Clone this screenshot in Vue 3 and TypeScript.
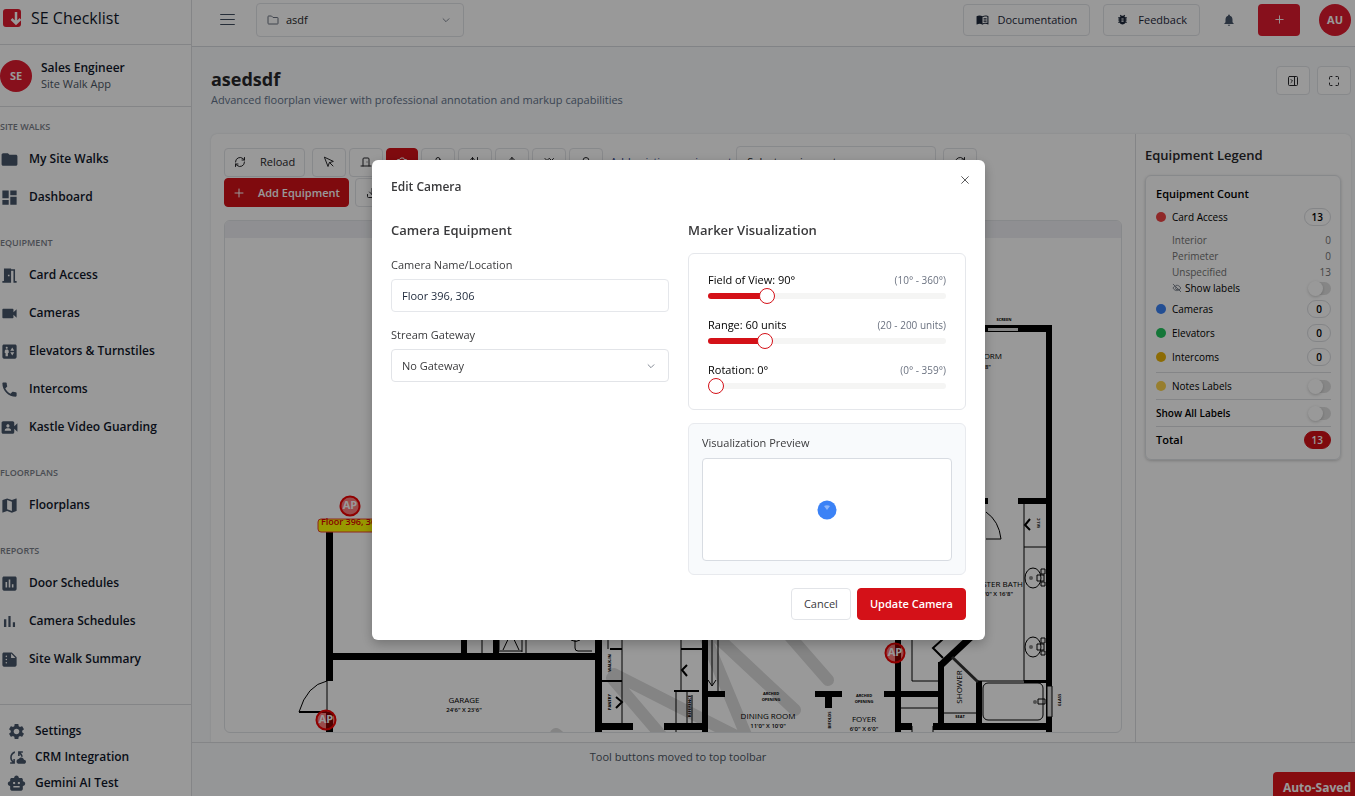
<script setup lang="ts">
import { computed, ref } from 'vue'

interface NavItem { label: string; icon: string }
interface NavGroup { title: string; items: NavItem[] }

const filled: Record<string, string> = {
  folder: 'M10 4H4c-1.1 0-1.99.9-1.99 2L2 18c0 1.1.9 2 2 2h16c1.1 0 2-.9 2-2V8c0-1.1-.9-2-2-2h-8l-2-2z',
  dashboard: 'M3 13h8V3H3v10zm0 8h8v-6H3v6zm10 0h8V11h-8v10zm0-18v6h8V3h-8z',
  door: 'M14 6v15H3v-2h2V3h9v1h5v15h2v2h-4V6h-3zm-4 5v2h2v-2h-2z',
  video: 'M17 10.5V7c0-.55-.45-1-1-1H4c-.55 0-1 .45-1 1v10c0 .55.45 1 1 1h12c.55 0 1-.45 1-1v-3.5l4 4v-11l-4 4z',
  elevator: 'M19 3H5c-1.1 0-2 .9-2 2v14c0 1.1.9 2 2 2h14c1.1 0 2-.9 2-2V5c0-1.1-.9-2-2-2zM8.5 6c.69 0 1.25.56 1.25 1.25S9.19 8.5 8.5 8.5s-1.25-.56-1.25-1.25S7.81 6 8.5 6zM11 14h-1v4H7v-4H6v-2.5c0-1.1.9-2 2-2h1c1.1 0 2 .9 2 2V14zm4.5 3L13 13h5l-2.5 4zM13 11l2.5-4 2.5 4h-5z',
  phone: 'M6.62 10.79c1.44 2.83 3.76 5.14 6.59 6.59l2.2-2.2c.27-.27.67-.36 1.02-.24 1.12.37 2.33.57 3.57.57.55 0 1 .45 1 1V20c0 .55-.45 1-1 1-9.39 0-17-7.61-17-17 0-.55.45-1 1-1h3.5c.55 0 1 .45 1 1 0 1.25.2 2.45.57 3.57.11.35.03.74-.25 1.02l-2.2 2.2z',
  guard: 'M18 10.48V6c0-1.1-.9-2-2-2H4c-1.1 0-2 .9-2 2v12c0 1.1.9 2 2 2h12c1.1 0 2-.9 2-2v-4.48l4 3.98v-11l-4 3.98zM10 8c1.1 0 2 .9 2 2s-.9 2-2 2-2-.9-2-2 .9-2 2-2zm4 8H6v-.57c0-.81.48-1.53 1.22-1.85.85-.37 1.79-.58 2.78-.58.99 0 1.93.21 2.78.58.74.32 1.22 1.04 1.22 1.85V16z',
  map: 'M20.5 3l-.16.03L15 5.1 9 3 3.36 4.9c-.21.07-.36.25-.36.48V20.5c0 .28.22.5.5.5l.16-.03L9 18.9l6 2.1 5.64-1.9c.21-.07.36-.25.36-.48V3.5c0-.28-.22-.5-.5-.5zM15 19l-6-2.11V5l6 2.11V19z',
  assessment: 'M19 3H5c-1.1 0-2 .9-2 2v14c0 1.1.9 2 2 2h14c1.1 0 2-.9 2-2V5c0-1.1-.9-2-2-2zM9 17H7v-7h2v7zm4 0h-2V7h2v10zm4 0h-2v-4h2v4z',
  bars: 'M5 9.2h3V19H5zM10.6 5h2.8v14h-2.8zm5.6 8H19v6h-2.8z',
  summary: 'M15 3H5c-1.1 0-1.99.9-1.99 2L3 19c0 1.1.89 2 1.99 2H19c1.1 0 2-.9 2-2V9l-6-6zM8 17c-.55 0-1-.45-1-1s.45-1 1-1 1 .45 1 1-.45 1-1 1zm0-4c-.55 0-1-.45-1-1s.45-1 1-1 1 .45 1 1-.45 1-1 1zm0-4c-.55 0-1-.45-1-1s.45-1 1-1 1 .45 1 1-.45 1-1 1zm6 1V4.5l5.5 5.5H14z',
  settings: 'M19.14 12.94c.04-.3.06-.61.06-.94 0-.32-.02-.64-.07-.94l2.03-1.58c.18-.14.23-.41.12-.61l-1.92-3.32c-.12-.22-.37-.29-.59-.22l-2.39.96c-.5-.38-1.03-.7-1.62-.94l-.36-2.54c-.04-.24-.24-.41-.48-.41h-3.84c-.24 0-.43.17-.47.41l-.36 2.54c-.59.24-1.13.57-1.62.94l-2.39-.96c-.22-.08-.47 0-.59.22L2.74 8.87c-.12.21-.08.47.12.61l2.03 1.58c-.05.3-.09.63-.09.94s.02.64.07.94l-2.03 1.58c-.18.14-.23.41-.12.61l1.92 3.32c.12.22.37.29.59.22l2.39-.96c.5.38 1.03.7 1.62.94l.36 2.54c.05.24.24.41.48.41h3.84c.24 0 .44-.17.47-.41l.36-2.54c.59-.24 1.13-.56 1.62-.94l2.39.96c.22.08.47 0 .59-.22l1.92-3.32c.12-.22.07-.47-.12-.61l-2.01-1.58zM12 15.6c-1.98 0-3.6-1.62-3.6-3.6s1.62-3.6 3.6-3.6 3.6 1.62 3.6 3.6-1.62 3.6-3.6 3.6z',
  sync: 'M21.5 14.98c-.02 0-.03 0-.05.01C21.2 13.3 19.76 12 18 12c-1.4 0-2.6.83-3.16 2.02C13.26 14.1 12 15.4 12 17c0 1.66 1.34 3 3 3l6.5-.02c1.38 0 2.5-1.12 2.5-2.5s-1.12-2.5-2.5-2.5zM10 4.26v2.09C7.67 7.18 6 9.39 6 12c0 1.77.78 3.34 2 4.44V14h2v6H4v-2h2.73C5.06 16.54 4 14.4 4 12c0-3.73 2.55-6.85 6-7.74zM20 6h-2.73c1.43 1.26 2.41 3.01 2.66 5h-2.02c-.23-1.36-.93-2.55-1.91-3.44V10h-2V4h6v2z',
  robot: 'M20 9V7c0-1.1-.9-2-2-2h-3c0-1.66-1.34-3-3-3S9 3.34 9 5H6c-1.1 0-2 .9-2 2v2c-1.66 0-3 1.34-3 3s1.34 3 3 3v4c0 1.1.9 2 2 2h12c1.1 0 2-.9 2-2v-4c1.66 0 3-1.34 3-3s-1.34-3-3-3zM7.5 11.5c0-.83.67-1.5 1.5-1.5s1.5.67 1.5 1.5S9.83 13 9 13s-1.5-.67-1.5-1.5zM16 17H8v-2h8v2zm-1-4c-.83 0-1.5-.67-1.5-1.5S14.17 10 15 10s1.5.67 1.5 1.5S15.83 13 15 13z',
  bug: 'M20 8h-2.81c-.45-.78-1.07-1.45-1.82-1.96L17 4.41 15.59 3l-2.17 2.17C12.96 5.06 12.49 5 12 5c-.49 0-.96.06-1.41.17L8.41 3 7 4.41l1.62 1.63C7.88 6.55 7.26 7.22 6.81 8H4v2h2.09c-.05.33-.09.66-.09 1v1H4v2h2v1c0 .34.04.67.09 1H4v2h2.81c1.04 1.79 2.97 3 5.19 3s4.15-1.21 5.19-3H20v-2h-2.09c.05-.33.09-.66.09-1v-1h2v-2h-2v-1c0-.34-.04-.67-.09-1H20V8zm-6 8h-4v-2h4v2zm0-4h-4v-2h4v2z',
  bell: 'M12 22c1.1 0 2-.9 2-2h-4c0 1.1.89 2 2 2zm6-6v-5c0-3.07-1.64-5.64-4.5-6.32V4c0-.83-.67-1.5-1.5-1.5s-1.5.67-1.5 1.5v.68C7.63 5.36 6 7.92 6 11v5l-2 2v1h16v-1l-2-2z',
  book: 'M21 5c-1.11-.35-2.33-.5-3.5-.5-1.95 0-4.05.4-5.5 1.5-1.45-1.1-3.55-1.5-5.5-1.5S2.45 4.9 1 6v14.65c0 .25.25.5.5.5.1 0 .15-.05.25-.05C3.1 20.45 5.05 20 6.5 20c1.95 0 4.05.4 5.5 1.5 1.35-.85 3.8-1.5 5.5-1.5 1.65 0 3.35.3 4.75 1.05.1.05.15.05.25.05.25 0 .5-.25.5-.5V6c-.6-.45-1.25-.75-2-1zm0 13.5c-1.1-.35-2.3-.5-3.5-.5-1.7 0-4.15.65-5.5 1.5V8c1.35-.85 3.8-1.5 5.5-1.5 1.2 0 2.4.15 3.5.5v11.5zM14 9.5h5.5V11H14zM14 12h5.5v1.5H14zM14 14.5h5.5V16H14z',
}

const outlined: Record<string, string> = {
  refresh: 'M3 12a9 9 0 0 1 15-6.7L21 8M21 3v5h-5M21 12a9 9 0 0 1-15 6.7L3 16M3 21v-5h5',
  pointer: 'M3 3l7 18 2.5-7.5L20 11zM13 13l7 7',
  doorway: 'M18 20V6a2 2 0 0 0-2-2H8a2 2 0 0 0-2 2v14M2 20h20M14 12v.01',
  camera: 'M14.5 4h-5L7 7H4a2 2 0 0 0-2 2v9a2 2 0 0 0 2 2h16a2 2 0 0 0 2-2V9a2 2 0 0 0-2-2h-3zM15 13a3 3 0 1 1-6 0 3 3 0 0 1 6 0z',
  user: 'M16 7a4 4 0 1 1-8 0 4 4 0 0 1 8 0zM5 21v-2a4 4 0 0 1 4-4h6a4 4 0 0 1 4 4v2',
  updown: 'M3 8l4-5 4 5M7 3v18M17 3v18M13 16l4 5 4-5',
  arrowUp: 'M12 21V3M7 8l5-5 5 5',
  chevrons: 'M4 5l4 4 4-4M13 5l4 4 4-4M6 19h12',
  search: 'M18 9a6 6 0 1 1-12 0 6 6 0 0 1 12 0zM21 21l-5.5-5.5',
  download: 'M12 3v12M7 10l5 5 5-5M3 15v4a2 2 0 0 0 2 2h14a2 2 0 0 0 2-2v-4',
  panel: 'M5 3h14a2 2 0 0 1 2 2v14a2 2 0 0 1-2 2H5a2 2 0 0 1-2-2V5a2 2 0 0 1 2-2zM15 3v18M8 9l3 3-3 3',
  maximize: 'M8 3H5a2 2 0 0 0-2 2v3M21 8V5a2 2 0 0 0-2-2h-3M3 16v3a2 2 0 0 0 2 2h3M16 21h3a2 2 0 0 0 2-2v-3',
  plus: 'M12 4v16M4 12h16',
  chevron: 'M5 9l7 7 7-7',
  close: 'M4 4l16 16M20 4L4 20',
  folderLine: 'M2 5a1 1 0 0 1 1-1h6l3 3h9a1 1 0 0 1 1 1v11a1 1 0 0 1-1 1H3a1 1 0 0 1-1-1z',
  menu: 'M1 4h22M1 12h22M1 20h22',
  eyeOff: 'M3 3l18 18M10 5.500c5-1 9 2.500 11 6.500-1 2-2 3-3.500 4.200M7 7c-2 1.200-3.500 3-4.500 5 3 6 9 8 14 5M9.500 10a3.500 3.500 0 0 0 5 5',
}

const navGroups: NavGroup[] = [
  { title: 'SITE WALKS', items: [{ label: 'My Site Walks', icon: 'folder' }, { label: 'Dashboard', icon: 'dashboard' }] },
  {
    title: 'EQUIPMENT',
    items: [
      { label: 'Card Access', icon: 'door' },
      { label: 'Cameras', icon: 'video' },
      { label: 'Elevators & Turnstiles', icon: 'elevator' },
      { label: 'Intercoms', icon: 'phone' },
      { label: 'Kastle Video Guarding', icon: 'guard' },
    ],
  },
  { title: 'FLOORPLANS', items: [{ label: 'Floorplans', icon: 'map' }] },
  {
    title: 'REPORTS',
    items: [
      { label: 'Door Schedules', icon: 'assessment' },
      { label: 'Camera Schedules', icon: 'bars' },
      { label: 'Site Walk Summary', icon: 'summary' },
    ],
  },
]

const footerItems: NavItem[] = [
  { label: 'Settings', icon: 'settings' },
  { label: 'CRM Integration', icon: 'sync' },
  { label: 'Gemini AI Test', icon: 'robot' },
]

const tools = [
  { name: 'Select', icon: 'pointer' },
  { name: 'Card access', icon: 'doorway' },
  { name: 'Camera', icon: 'camera' },
  { name: 'Turnstile', icon: 'user' },
  { name: 'Elevator', icon: 'updown' },
  { name: 'Move', icon: 'arrowUp' },
  { name: 'Intercom', icon: 'chevrons' },
  { name: 'Search', icon: 'search' },
]
const activeTool = ref('Camera')

const accessBreakdown = [
  { label: 'Interior', count: 0 },
  { label: 'Perimeter', count: 0 },
  { label: 'Unspecified', count: 13 },
]
const equipment = [
  { label: 'Cameras', count: 0, tone: 'blue' },
  { label: 'Elevators', count: 0, tone: 'green' },
  { label: 'Intercoms', count: 0, tone: 'amber' },
]

const markers = [
  { x: 350, y: 506 },
  { x: 326, y: 720 },
  { x: 895, y: 653 },
]

const modalOpen = ref(true)
const project = ref('asdf')
const cameraName = ref('Floor 396, 306')
const gateway = ref('No Gateway')

const fov = ref(90)
const range = ref(60)
const rotation = ref(0)

const fillOf = (value: number, min: number, max: number) => `${((value - min) / (max - min)) * 100}%`

const sliders = computed(() => [
  { id: 'fov', label: `Field of View: ${fov.value}°`, hint: '(10° - 360°)', value: fov.value, min: 10, max: 360, fill: fillOf(fov.value, 10, 360) },
  { id: 'range', label: `Range: ${range.value} units`, hint: '(20 - 200 units)', value: range.value, min: 20, max: 200, fill: fillOf(range.value, 20, 200) },
  { id: 'rotation', label: `Rotation: ${rotation.value}°`, hint: '(0° - 359°)', value: rotation.value, min: 0, max: 359, fill: fillOf(rotation.value, 0, 359) },
])

function slide(id: string, event: Event) {
  const value = Number((event.target as HTMLInputElement).value)
  if (id === 'fov') fov.value = value
  else if (id === 'range') range.value = value
  else rotation.value = value
}
</script>

<template>
  <div class="shell">
    <aside class="sidebar">
      <div class="brand">
        <svg class="logo" viewBox="0 0 20 20" aria-hidden="true">
          <rect x="0" y="1" width="18" height="18" rx="3" fill="#e21b2f" />
          <path d="M13 4v11M8.500 11l4.500 4.500 4.500-4.500" fill="none" stroke="#fff" stroke-width="2.500" />
        </svg>
        <span>SE Checklist</span>
      </div>
      <div class="profile">
        <span class="avatar">SE</span>
        <div>
          <div class="profile-name">Sales Engineer</div>
          <div class="profile-sub">Site Walk App</div>
        </div>
      </div>
      <nav class="nav">
        <section v-for="group in navGroups" :key="group.title" class="nav-group">
          <h2>{{ group.title }}</h2>
          <a v-for="item in group.items" :key="item.label" href="#">
            <svg class="fill-icon" viewBox="0 0 24 24" aria-hidden="true"><path :d="filled[item.icon]" /></svg>
            {{ item.label }}
          </a>
        </section>
      </nav>
      <nav class="nav-footer">
        <a v-for="item in footerItems" :key="item.label" href="#">
          <svg class="fill-icon" viewBox="0 0 24 24" aria-hidden="true"><path :d="filled[item.icon]" /></svg>
          {{ item.label }}
        </a>
      </nav>
    </aside>

    <div class="main">
      <header class="topbar">
        <button class="menu-btn" aria-label="Toggle menu">
          <svg class="line-icon" viewBox="0 0 24 24"><path :d="outlined.menu" /></svg>
        </button>
        <label class="select-box project">
          <svg class="line-icon" viewBox="0 0 24 24" aria-hidden="true"><path :d="outlined.folderLine" /></svg>
          <select v-model="project" aria-label="Project"><option>asdf</option></select>
          <svg class="line-icon chev" viewBox="0 0 24 24" aria-hidden="true"><path :d="outlined.chevron" /></svg>
        </label>
        <div class="top-actions">
          <button class="btn tall docs">
            <svg class="fill-icon" viewBox="0 0 24 24" aria-hidden="true"><path :d="filled.book" fill-rule="evenodd" /></svg>
            Documentation
          </button>
          <button class="btn tall">
            <svg class="fill-icon" viewBox="0 0 24 24" aria-hidden="true"><path :d="filled.bug" /></svg>
            Feedback
          </button>
          <button class="bell" aria-label="Notifications">
            <svg class="fill-icon" viewBox="0 0 24 24"><path :d="filled.bell" /></svg>
          </button>
          <button class="create" aria-label="Create">
            <svg class="line-icon" viewBox="0 0 24 24"><path :d="outlined.plus" /></svg>
          </button>
          <span class="avatar">AU</span>
        </div>
      </header>

      <div class="page-head">
        <div>
          <h1>asedsdf</h1>
          <p>Advanced floorplan viewer with professional annotation and markup capabilities</p>
        </div>
        <div class="page-actions">
          <button class="btn icon" aria-label="Collapse legend">
            <svg class="line-icon" viewBox="0 0 24 24"><path :d="outlined.panel" /></svg>
          </button>
          <button class="btn icon" aria-label="Fullscreen">
            <svg class="line-icon" viewBox="0 0 24 24"><path :d="outlined.maximize" /></svg>
          </button>
        </div>
      </div>

      <div class="workspace">
        <section class="viewer">
          <div class="toolbar">
            <button class="btn reload">
              <svg class="line-icon" viewBox="0 0 24 24" aria-hidden="true"><path :d="outlined.refresh" /></svg>
              Reload
            </button>
            <div class="tools">
              <button
                v-for="tool in tools"
                :key="tool.name"
                class="btn icon"
                :class="{ active: activeTool === tool.name }"
                :aria-label="tool.name"
                @click="activeTool = tool.name"
              >
                <svg class="line-icon" viewBox="0 0 24 24"><path :d="outlined[tool.icon]" /></svg>
              </button>
            </div>
            <label class="existing" for="existing">Add existing equipment:</label>
            <div class="select-box existing-select">
              <select id="existing"><option>Select equipment...</option></select>
            </div>
            <button class="btn icon" aria-label="Refresh equipment">
              <svg class="line-icon" viewBox="0 0 24 24"><path :d="outlined.refresh" /></svg>
            </button>
          </div>
          <div class="toolbar second">
            <button class="btn primary add">
              <svg class="line-icon" viewBox="0 0 24 24" aria-hidden="true"><path :d="outlined.plus" /></svg>
              Add Equipment
            </button>
            <button class="btn icon" aria-label="Download">
              <svg class="line-icon" viewBox="0 0 24 24"><path :d="outlined.download" /></svg>
            </button>
          </div>

          <div class="canvas">
            <svg class="plan" viewBox="225 221 896 511" width="896" height="511" role="img" aria-label="Floorplan">
              <rect x="225" y="221" width="2000" height="17" fill="#eeeff3" />
              <g stroke="#dcdcdc" stroke-width="12" stroke-linecap="round" fill="none">
                <path d="M614 674L740 738M612 678L665 740M704 634L748 740M718 638L795 710M780 625L828 680M556 734L640 800" />
              </g>
              <g fill="#000">
                <path d="M326 532h7v149h-7zM326 712h7v20h-7zM333 653h262v7H333zM461 630h6v24h-6zM493 630h6v24h-6zM595 630h7v102h-7zM595 723h38v7h-38z" />
                <path d="M702 630h6v102h-6zM664 723h40v7h-40zM708 691h17v6h-17zM815 691h27v6h-27zM825 697h7v11h-7zM884 691h56v6h-56zM895 630h6v102h-6zM895 723h17v7h-17z" />
                <path d="M938 662h6v66h-6zM976 681h6v46h-6zM933 723h115v7H933zM1046 326h6v406h-6zM980 325h72v7h-72zM1018 498h28v6h-28zM980 498h8v6h-8zM1024 680h24v3h-24z" />
              </g>
              <path d="M988 328h30v3h-30zM1047 686h5v31h-5z" fill="#ddd" />
              <g stroke="#000" fill="none">
                <path d="M941 665L972 636" stroke-width="7" />
                <path d="M952 657L978 682" stroke="#333" stroke-width="3" />
                <path d="M1030 519l-5 6 5 5M687 665l-5 5 5 6M616 697l6 5-6 6" stroke-width="2" />
                <path d="M299 712h28M943 658l-10-10 10-9M674 691h25M610 649h12M601 681h21M681 649h21" stroke-width="2" />
                <path d="M299 712q8-27 28-31M986 539h15M986 512q13 9 15 27" />
                <path d="M327 681v31M482 630v23M526 630v23M500 651h22M503 650l8-17 8 17M499 630v22M522 630v22M575 630v18q0 3 3 3h14M571 640q5 3 9 0M622 630v93M681 630v61M676 691v41M687 691v32M692 695v30M712 630v56M718 630v61M708 680l4 6 4-6M608 649v-12M912 630v51h26M901 708h37M944 713h32M978 681h46M1024 504v177M1024 547h22M912 732v-6M933 732v-6" />
                <rect x="983" y="683" width="60" height="37" rx="5" />
                <ellipse cx="1033" cy="578" rx="8" ry="10" />
                <ellipse cx="1033" cy="647" rx="8" ry="10" />
                <path d="M1037 575h7v6h-7zM1041 569h4v5h-4zM1041 582h4v4h-4zM1037 644h7v6h-7zM1041 638h4v5h-4zM1041 651h4v4h-4zM1038 699h7v5h-7zM1047 686h5v31h-5z" />
              </g>
              <g fill="#888">
                <circle cx="1031" cy="578" r="2" /><circle cx="1031" cy="647" r="2" /><circle cx="1035" cy="702" r="2" />
              </g>
              <g class="room">
                <text x="464" y="703">GARAGE</text>
                <text x="768" y="719">DINING ROOM</text>
                <text x="864" y="722">FOYER</text>
                <text x="1002" y="359" text-anchor="end" class="end">DORM</text>
                <text x="1023" y="587" class="end">MASTER BATH</text>
                <text transform="translate(962 687) rotate(-90)">SHOWER</text>
              </g>
              <g class="dims">
                <text x="464" y="712">24'6" X 23'6"</text>
                <text x="768" y="728">11'0" X 10'0"</text>
                <text x="864" y="731">6'0" X 6'0"</text>
                <text x="991" y="369" class="end">12'8"</text>
                <text x="1013" y="596" class="end">10'0" X 16'8"</text>
              </g>
              <g class="tiny">
                <text x="771" y="695">ARCHED</text><text x="771" y="701">OPENING</text>
                <text x="864" y="697">ARCHED</text><text x="864" y="703">OPENING</text>
                <text x="1004" y="321">SCREEN</text>
                <text x="960" y="718">SEAT</text>
                <text transform="translate(611 663) rotate(-90)">WALK-IN</text>
                <text transform="translate(611 702) rotate(-90)">PANTRY</text>
                <text transform="translate(691 706) rotate(-90)">REFERENCE</text>
                <text transform="translate(831 720) rotate(-90)">BIFOLDS</text>
                <text transform="translate(1040 523) rotate(-90)">W.I.C</text>
                <text transform="translate(1061 700) rotate(-90)">GLASS</text>
              </g>
              <rect x="318" y="519" width="64" height="13" rx="3" fill="#ff0" stroke="#f04030" />
              <text class="tag" x="321" y="525">Floor 396, 306</text>
              <g v-for="(marker, i) in markers" :key="i" class="marker">
                <circle :cx="marker.x" :cy="marker.y" r="9.500" />
                <text :x="marker.x" :y="marker.y + 3">AP</text>
              </g>
            </svg>
          </div>
        </section>

        <aside class="legend">
          <h2>Equipment Legend</h2>
          <div class="legend-card">
            <h3>Equipment Count</h3>
            <div class="row"><i class="dot red" />Card Access<b class="badge">13</b></div>
            <div class="sub">
              <div v-for="entry in accessBreakdown" :key="entry.label" class="sub-row">
                <span>{{ entry.label }}</span><span>{{ entry.count }}</span>
              </div>
              <label class="sub-row show">
                <svg class="line-icon" viewBox="0 0 24 24" aria-hidden="true"><path :d="outlined.eyeOff" /></svg>
                Show labels
                <input type="checkbox" class="switch" />
              </label>
            </div>
            <div v-for="entry in equipment" :key="entry.label" class="row">
              <i class="dot" :class="entry.tone" />{{ entry.label }}<b class="badge">{{ entry.count }}</b>
            </div>
            <div class="toggles">
              <label class="row ruled"><i class="dot yellow" />Notes Labels<input type="checkbox" class="switch" /></label>
              <label class="row ruled strong">Show All Labels<input type="checkbox" class="switch" /></label>
              <div class="row ruled total">Total<b class="badge solid">13</b></div>
            </div>
          </div>
        </aside>
      </div>
      <footer class="status">Tool buttons moved to top toolbar</footer>
    </div>

    <div class="saved">Auto-Saved</div>

    <div v-if="modalOpen" class="overlay">
      <form class="modal" role="dialog" aria-modal="true" aria-labelledby="dialog-title" @submit.prevent="modalOpen = false">
        <header class="modal-head">
          <h2 id="dialog-title">Edit Camera</h2>
          <button type="button" class="close" aria-label="Close" @click="modalOpen = false">
            <svg class="line-icon" viewBox="0 0 24 24"><path :d="outlined.close" /></svg>
          </button>
        </header>
        <div class="columns">
          <section>
            <h3>Camera Equipment</h3>
            <div class="fields">
              <div class="field">
                <label for="camera-name">Camera Name/Location</label>
                <input id="camera-name" v-model="cameraName" type="text" />
              </div>
              <div class="field">
                <label for="gateway">Stream Gateway</label>
                <div class="select-box gateway">
                  <select id="gateway" v-model="gateway"><option>No Gateway</option></select>
                  <svg class="line-icon chev" viewBox="0 0 24 24" aria-hidden="true"><path :d="outlined.chevron" /></svg>
                </div>
              </div>
            </div>
          </section>
          <section>
            <h3>Marker Visualization</h3>
            <div class="slider-card">
              <div v-for="s in sliders" :key="s.id" class="slider">
                <div class="slider-head">
                  <label :for="s.id">{{ s.label }}</label>
                  <span>{{ s.hint }}</span>
                </div>
                <input :id="s.id" type="range" :min="s.min" :max="s.max" :value="s.value" :style="{ '--fill': s.fill }" @input="slide(s.id, $event)" />
              </div>
            </div>
            <div class="preview-card">
              <h4>Visualization Preview</h4>
              <div class="preview">
                <svg viewBox="0 0 20 20" aria-hidden="true">
                  <circle cx="10" cy="10" r="9.500" fill="#3b82f6" />
                  <path d="M7 6q3-1.500 6 0L10 10z" fill="#8db6fa" />
                </svg>
              </div>
            </div>
          </section>
        </div>
        <footer class="modal-foot">
          <button type="button" class="btn tall" @click="modalOpen = false">Cancel</button>
          <button type="submit" class="btn tall primary">Update Camera</button>
        </footer>
      </form>
    </div>
  </div>
</template>

<style>
body {
  margin: 0;
  overflow: hidden;
}
</style>

<style scoped>
.shell {
  display: flex;
  height: 100vh;
  overflow: hidden;
  background: #f8fafc;
  color: #27272a;
  font: 11px/16px "Open Sans", "Noto Sans", sans-serif;
}
.shell *,
.shell *::before {
  box-sizing: border-box;
}
h1, h2, h3, h4, p {
  margin: 0;
}
a {
  color: inherit;
  text-decoration: none;
}
button, input, select {
  font: inherit;
  color: inherit;
  margin: 0;
}
button {
  cursor: pointer;
}
svg {
  flex: none;
}
.fill-icon {
  fill: currentColor;
}
.line-icon {
  fill: none;
  stroke: currentColor;
  stroke-width: 2;
  stroke-linecap: round;
  stroke-linejoin: round;
  width: 12px;
  height: 12px;
}

/* Sidebar */
.sidebar {
  display: flex;
  flex-direction: column;
  flex: none;
  width: 192px;
  background: #fff;
  border-right: 1px solid #dcdee2;
  color: #0f172a;
}
.brand {
  display: flex;
  align-items: center;
  gap: 8px;
  height: 45px;
  padding: 0 3px 9px;
  border-bottom: 1px solid #dcdee2;
  font-size: 16px;
  font-weight: 500;
}
.logo {
  width: 20px;
  height: 20px;
}
.profile {
  display: flex;
  align-items: center;
  gap: 9px;
  height: 62px;
  border-bottom: 1px solid #dcdee2;
}
.avatar {
  display: grid;
  place-items: center;
  flex: none;
  width: 32px;
  height: 32px;
  border-radius: 50%;
  background: #e21b2f;
  color: #fff;
  font-weight: 700;
  font-size: 11px;
}
.profile-name {
  font-size: 12px;
  line-height: 17px;
  font-weight: 600;
}
.profile-sub {
  color: #4b5563;
}
.nav {
  flex: 1;
  padding-top: 6px;
}
.nav-group {
  margin-bottom: 13px;
}
.nav-group h2 {
  font-size: 9px;
  font-weight: 600;
  line-height: 27px;
  color: #7b808a;
}
.nav a,
.nav-footer a {
  display: flex;
  align-items: center;
  gap: 10px;
  height: 38px;
  font-size: 12px;
  font-weight: 600;
}
.nav .fill-icon,
.nav-footer .fill-icon {
  width: 19px;
  height: 19px;
  fill: #475569;
}
.nav-footer {
  padding: 13px 0 0 7px;
  border-top: 1px solid #dcdee2;
}
.nav-footer a {
  gap: 9px;
  height: 26px;
}

/* Shared controls */
.btn {
  display: inline-flex;
  align-items: center;
  justify-content: center;
  gap: 12px;
  flex: none;
  height: 29px;
  padding: 0 9px;
  border: 1px solid #e2e4e8;
  border-radius: 4px;
  background: #fff;
  font-weight: 500;
  white-space: nowrap;
}
.btn.icon {
  width: 34px;
  padding: 0;
}
.btn.tall {
  height: 32px;
  padding: 0 12px;
}
.btn.primary,
.btn.active {
  border-color: #d41118;
  background: #d41118;
  color: #fff;
  font-weight: 600;
}
.btn.active {
  width: 32px;
}
.select-box {
  display: flex;
  align-items: center;
  gap: 7px;
  height: 32px;
  padding: 0 10px;
  border: 1px solid #e2e4e8;
  border-radius: 4px;
  background: #fff;
}
.select-box select {
  flex: 1;
  min-width: 0;
  padding: 0;
  border: 0;
  background: transparent;
  appearance: none;
  outline: none;
}
.select-box .line-icon {
  color: #6b7280;
}
.select-box .chev {
  width: 10px;
  height: 10px;
  margin-right: 2px;
}

/* Top bar */
.main {
  display: flex;
  flex-direction: column;
  flex: 1;
  min-width: 0;
}
.topbar {
  display: flex;
  align-items: center;
  height: 47px;
  padding: 0 4px 7px 26px;
  border-bottom: 1px solid #d8dadf;
  background: #fff;
}
.menu-btn,
.bell,
.create,
.close {
  display: grid;
  place-items: center;
  padding: 0;
  border: 0;
  background: none;
}
.menu-btn {
  width: 18px;
  color: #334155;
}
.menu-btn .line-icon {
  width: 15px;
  height: 15px;
  stroke-width: 1.5;
}
.project {
  width: 208px;
  height: 34px;
  margin-left: 20px;
}
.top-actions {
  display: flex;
  align-items: center;
  gap: 13px;
  margin-left: auto;
}
.top-actions .btn {
  gap: 9px;
  color: #1e293b;
}
.top-actions .btn .fill-icon {
  width: 13px;
  height: 13px;
}
.bell {
  width: 32px;
  height: 32px;
  color: #475569;
}
.bell .fill-icon {
  width: 14px;
  height: 14px;
}
.create {
  width: 42px;
  height: 32px;
  border-radius: 4px;
  background: #e21b2f;
  color: #fff;
}
.create .line-icon {
  width: 11px;
  height: 11px;
}
.top-actions .avatar {
  margin-left: 6px;
}

/* Page header */
.page-head {
  display: flex;
  justify-content: space-between;
  padding: 19px 4px 0 19px;
  height: 87px;
  flex: none;
}
.page-head h1 {
  font-size: 18px;
  line-height: 26px;
  font-weight: 700;
}
.page-head p {
  color: #64748b;
}
.page-actions {
  display: flex;
  gap: 7px;
}

/* Workspace */
.workspace {
  display: flex;
  flex: 1;
  min-height: 0;
  margin: 0 4px 0 19px;
  border-radius: 6px 6px 0 0;
  background: #fff;
  box-shadow: 0 0 2px rgba(0, 0, 0, 0.12);
}
.viewer {
  display: flex;
  flex-direction: column;
  flex: 1;
  min-width: 0;
  padding: 12px 13px 9px;
}
.toolbar {
  display: flex;
  align-items: center;
  gap: 7px;
  height: 32px;
}
.toolbar.second {
  height: 29px;
  gap: 6px;
}
.reload {
  gap: 14px;
}
.add {
  gap: 13px;
  padding: 0 8px;
}
.tools {
  display: flex;
  gap: 3px;
}
.existing {
  width: 119px;
  color: #1e3a8a;
  white-space: nowrap;
}
.existing-select {
  width: 200px;
}
.canvas {
  flex: 1;
  min-height: 0;
  margin-top: 13px;
  border: 1px solid #e2e4e8;
  border-radius: 6px;
  overflow: hidden;
}
.plan {
  display: block;
}
.room {
  font-size: 8px;
  text-anchor: middle;
}
.dims {
  font-size: 6px;
  font-weight: 600;
  text-anchor: middle;
}
.end {
  text-anchor: end;
}
.tiny {
  font-size: 4px;
  font-weight: 700;
  text-anchor: middle;
}
.tag {
  font-size: 9px;
  font-weight: 600;
  fill: #e00000;
}
.marker circle {
  fill: rgba(255, 0, 0, 0.5);
  stroke: #f00000;
  stroke-width: 2;
}
.marker text {
  font-size: 11px;
  font-weight: 700;
  text-anchor: middle;
  fill: #fff;
}
.status {
  flex: none;
  height: 54px;
  padding: 6px 191px 0 0;
  border-top: 1px solid #dcdee2;
  text-align: center;
  color: #4b5563;
}
.saved {
  position: fixed;
  right: 0;
  bottom: 0;
  padding: 8px 4px 0 10px;
  border-radius: 4px 0 0 0;
  background: #e0141c;
  color: #fff;
  font-size: 12px;
  font-weight: 700;
}

/* Legend */
.legend {
  flex: none;
  width: 216px;
  padding: 11px 10px 0 9px;
  border-left: 1px solid #dcdee2;
}
.legend h2 {
  font-size: 13px;
  line-height: 20px;
  font-weight: 600;
}
.legend-card {
  margin-top: 10px;
  padding: 9px 9px 6px 10px;
  border: 1px solid #e2e4e8;
  border-radius: 6px;
  box-shadow: 0 1px 3px rgba(0, 0, 0, 0.2);
  font-size: 10px;
  color: #000;
}
.legend h3 {
  margin-bottom: 2px;
  font-size: 11px;
  line-height: 18px;
  font-weight: 600;
}
.row {
  display: flex;
  align-items: center;
  height: 24px;
  font-weight: 500;
}
.dot {
  width: 10px;
  height: 10px;
  margin-right: 6px;
  border-radius: 50%;
}
.red { background: #ef4444; }
.blue { background: #3b82f6; }
.green { background: #22c55e; }
.amber { background: #eab308; }
.yellow { background: #fcd34d; }
.badge {
  min-width: 24px;
  margin-left: auto;
  padding: 0 7px;
  border: 1px solid #dcdee2;
  border-radius: 9px;
  text-align: center;
  font-weight: 600;
}
.badge.solid {
  border-color: #d41118;
  background: #d41118;
  color: #fff;
}
.sub {
  padding: 3px 0 1px 16px;
}
.sub-row {
  display: flex;
  align-items: center;
  justify-content: space-between;
  height: 16px;
  color: #737373;
}
.sub-row.show {
  gap: 3px;
  color: #000;
}
.sub-row .line-icon {
  width: 10px;
  height: 10px;
  stroke: #6b7280;
}
.toggles {
  margin-top: 3px;
}
.row.ruled {
  height: 27px;
  border-top: 1px solid #dcdee2;
}
.row.strong {
  font-weight: 600;
}
.row.total {
  font-size: 11px;
  font-weight: 600;
}
.total .badge {
  font-size: 10px;
}
.switch {
  appearance: none;
  width: 19px;
  height: 13px;
  margin-left: auto;
  border-radius: 7px;
  background: #e0e0e0;
}
.switch::before {
  content: "";
  display: block;
  width: 15px;
  height: 15px;
  margin: -1px 0 0 -4px;
  border-radius: 50%;
  background: #fff;
  box-shadow: 0 1px 3px rgba(0, 0, 0, 0.2);
}
.switch:checked::before {
  margin-left: 8px;
}

/* Dialog */
.overlay {
  position: fixed;
  inset: 0;
  display: grid;
  place-items: center;
  padding: 4px 0 0 2px;
  background: rgba(0, 0, 0, 0.4);
}
.modal {
  width: min(613px, 100%);
  padding: 18px 19px 20px;
  border-radius: 6px;
  background: #fff;
  box-shadow: 0 4px 12px rgba(0, 0, 0, 0.25);
  color: #3a3a3c;
}
.modal-head {
  display: flex;
  justify-content: space-between;
  height: 43px;
}
.modal-head h2 {
  font-size: 12px;
  line-height: 18px;
  font-weight: 600;
}
.close {
  width: 16px;
  height: 16px;
  margin: -6px -7px 0 0;
}
.close .line-icon {
  width: 10px;
  height: 10px;
}
.columns {
  display: grid;
  grid-template-columns: 1fr 1fr;
  gap: 19px;
}
.columns h3 {
  margin-bottom: 14px;
  font-size: 13px;
  line-height: 18px;
  font-weight: 600;
}
.fields {
  display: grid;
  gap: 15px;
  padding-top: 4px;
}
.field {
  display: grid;
  gap: 6px;
}
.field label {
  font-weight: 500;
}
.field input {
  width: 100%;
  height: 33px;
  padding: 0 10px;
  border: 1px solid #e5e7eb;
  border-radius: 4px;
  outline: none;
  color: #1e293b;
}
.gateway {
  height: 33px;
}
.slider-card {
  display: grid;
  gap: 14px;
  padding: 19px 19px 15px;
  border: 1px solid #e5e7eb;
  border-radius: 6px;
  color: #000;
}
.slider-head {
  display: flex;
  justify-content: space-between;
  margin-bottom: 1px;
  line-height: 14px;
  font-weight: 500;
}
.slider-head span {
  font-size: 10px;
  font-weight: 400;
  color: #6b7280;
}
.slider input {
  display: block;
  appearance: none;
  width: 100%;
  height: 16px;
  background: none;
  outline: none;
}
.slider input::-webkit-slider-runnable-track {
  height: 6px;
  border-radius: 3px;
  background: linear-gradient(#d41118, #d41118) 0 0 / var(--fill) 100% no-repeat #f5f5f4;
}
.slider input::-webkit-slider-thumb {
  appearance: none;
  width: 16px;
  height: 16px;
  margin-top: -5px;
  border: 1px solid #d41118;
  border-radius: 50%;
  background: #fff;
}
.preview-card {
  margin-top: 13px;
  padding: 11px 13px 13px;
  border: 1px solid #e8eaee;
  border-radius: 6px;
  background: #f8fafc;
}
.preview-card h4 {
  font-size: 11px;
  font-weight: 500;
}
.preview {
  display: grid;
  place-items: center;
  height: 103px;
  margin-top: 7px;
  border: 1px solid #d8dce2;
  border-radius: 4px;
  background: #fff;
}
.preview svg {
  width: 20px;
  height: 20px;
}
.modal-foot {
  display: flex;
  justify-content: flex-end;
  gap: 6px;
  margin-top: 13px;
}
</style>
